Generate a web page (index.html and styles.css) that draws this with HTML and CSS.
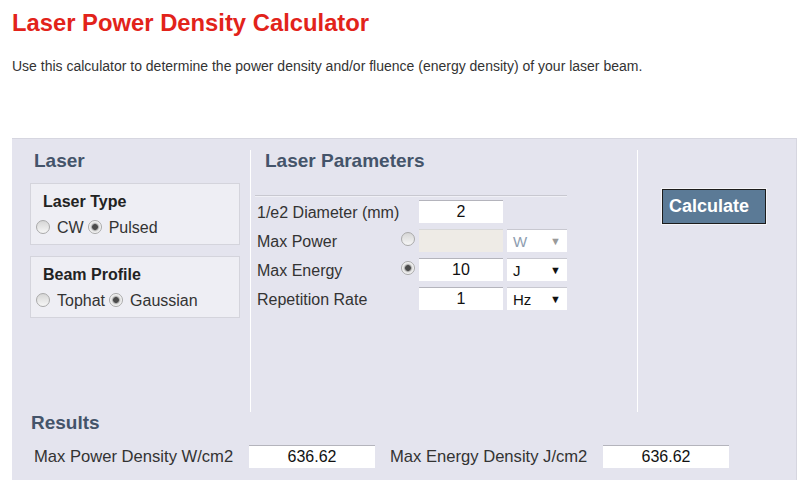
FILE: index.html
```html
<!DOCTYPE html>
<html lang="en">
<head>
    <meta charset="UTF-8">
    <title>Laser Power Density Calculator</title>
    <link rel="stylesheet" href="styles.css">
</head>
<body>
    <h1 class="title">Laser Power Density Calculator</h1>
    <p class="intro">Use this calculator to determine the power density and/or fluence (energy density) of your laser beam.</p>

    <div class="calc">
        <div class="cols">
            <div class="col col-laser">
                <h2 class="sec-head">Laser</h2>
                <div class="opt-box">
                    <div class="opt-title">Laser Type</div>
                    <div class="opt-row">
                        <input type="radio" name="ltype" id="cw"><label for="cw">CW</label>
                        <input type="radio" name="ltype" id="pulsed" checked><label for="pulsed">Pulsed</label>
                    </div>
                </div>
                <div class="opt-box">
                    <div class="opt-title">Beam Profile</div>
                    <div class="opt-row">
                        <input type="radio" name="profile" id="tophat"><label for="tophat">Tophat</label>
                        <input type="radio" name="profile" id="gauss" checked><label for="gauss">Gaussian</label>
                    </div>
                </div>
            </div>

            <div class="col col-params">
                <h2 class="sec-head">Laser Parameters</h2>
                <div class="rule"></div>
                <div class="param-grid">
                    <label>1/e2 Diameter (mm)</label>
                    <span></span>
                    <input type="text" class="num" value="2">
                    <span></span>

                    <label>Max Power</label>
                    <input type="radio" name="mode" class="mode">
                    <input type="text" class="num" disabled>
                    <div class="unit disabled"><span>W</span><span class="arrow">▼</span></div>

                    <label>Max Energy</label>
                    <input type="radio" name="mode" class="mode" checked>
                    <input type="text" class="num" value="10">
                    <div class="unit"><span>J</span><span class="arrow">▼</span></div>

                    <label>Repetition Rate</label>
                    <span></span>
                    <input type="text" class="num" value="1">
                    <div class="unit"><span>Hz</span><span class="arrow">▼</span></div>
                </div>
            </div>

            <div class="col col-action">
                <button class="calc-btn">Calculate</button>
            </div>
        </div>

        <div class="results">
            <h2 class="sec-head">Results</h2>
            <div class="result-row">
                <label class="res-label">Max Power Density W/cm2</label>
                <input type="text" class="num res-out" value="636.62" readonly>
                <label class="res-label second">Max Energy Density J/cm2</label>
                <input type="text" class="num res-out" value="636.62" readonly>
            </div>
        </div>
    </div>
</body>
</html>
```

FILE: styles.css
```css
body {
    margin: 0;
    padding: 9px 0 0 12px;
    background-color: #fff;
    font-family: "Liberation Sans", Arial, sans-serif;
    color: #333;
    overflow: hidden;
}
.title {
    margin: 0;
    font-size: 23.8px;
    line-height: 28px;
    color: #e2231a;
}
.intro {
    margin: 21px 0 0;
    font-size: 14px;
    line-height: 16px;
    color: #333;
}
.calc {
    margin-top: 64px;
    width: 785px;
    height: 343px;
    background-color: #e4e4ee;
    border-top: 1px solid #d6d6e0;
    border-right: 1px solid #d6d6e0;
    box-sizing: border-box;
}
.cols {
    display: grid;
    grid-template-columns: 238px 388px 1fr;
    margin-top: 11px;
    height: 262px;
}
.col-params {
    border-left: 1px solid #fff;
    border-right: 1px solid #fff;
    padding-left: 4px;
}
.sec-head {
    margin: 0;
    font-size: 19px;
    line-height: 22px;
    color: #44546a;
}
.col-laser {
    padding: 0 10px 0 18px;
}
.col-laser .sec-head {
    padding-left: 4px;
    margin-bottom: 11px;
}
.opt-box {
    background-color: #eeeef4;
    border: 1px solid #d4d4dc;
    padding: 8px 5px 7px;
    margin-bottom: 11px;
    height: 62px;
    box-sizing: border-box;
}
.opt-title {
    font-size: 16px;
    line-height: 19px;
    font-weight: bold;
    color: #222;
    padding-left: 7px;
}
.opt-row {
    display: flex;
    align-items: center;
    margin-top: 7px;
    font-size: 16px;
    line-height: 20px;
    color: #333;
}
.opt-row label {
    margin: 0 4px 0 7px;
}
input[type="radio"] {
    appearance: none;
    -webkit-appearance: none;
    flex-shrink: 0;
    width: 14px;
    height: 14px;
    margin: 0;
    border-radius: 50%;
    border: 1px solid #a9a9a9;
    background: linear-gradient(#d6d6d6, #f6f6f6);
    box-sizing: border-box;
}
input[type="radio"]:checked {
    background: radial-gradient(circle, #4a4a4a 0 2.5px, #8a8a8a 3px, #d6d6d6 4px, #f4f4f4 5.5px);
}
.opt-row input[type="radio"] {
    margin-top: -3px;
}
.col-params .sec-head {
    padding-left: 10px;
}
.rule {
    width: 312px;
    height: 1px;
    margin-top: 23px;
    background-color: #c8c8d0;
    border-bottom: 1px solid #f0f0f6;
}
.param-grid {
    display: grid;
    grid-template-columns: 146px 18px 88px 60px;
    grid-auto-rows: 23px;
    row-gap: 6px;
    margin-top: 3px;
    align-items: center;
    font-size: 16px;
}
.param-grid label {
    padding: 2px 0 0 2px;
    color: #333;
}
.param-grid .mode {
    margin-top: -3px;
}
.num {
    width: 84px;
    height: 23px;
    padding: 0;
    border: none;
    border-top: 1px solid #b4b4bc;
    background-color: #fff;
    font-family: inherit;
    font-size: 16px;
    color: #111;
    text-align: center;
    box-sizing: border-box;
}
.num:disabled {
    background-color: #eeebe6;
    border-top-color: #d8d8d8;
}
.unit {
    display: flex;
    justify-content: space-between;
    align-items: center;
    height: 23px;
    padding: 0 6px;
    background-color: #fff;
    border-top: 1px solid #c8c8d0;
    box-sizing: border-box;
    font-size: 15px;
    color: #111;
}
.unit .arrow {
    font-size: 11px;
    color: #111;
}
.unit.disabled {
    color: #8d9db0;
}
.unit.disabled .arrow {
    color: #9a9a9a;
}
.col-action {
    padding: 39px 0 0 24px;
}
.calc-btn {
    width: 104px;
    height: 35px;
    padding: 0 0 0 6px;
    text-align: left;
    background-color: #5b7a96;
    color: #fff;
    font-family: inherit;
    font-size: 18px;
    font-weight: bold;
    border: 1px solid #1c1c1c;
    outline: 1px solid #f4f4f8;
    cursor: pointer;
}
.results {
    padding-left: 19px;
}
.result-row {
    display: flex;
    align-items: center;
    margin-top: 11px;
}
.res-label {
    width: 218px;
    padding-left: 3px;
    box-sizing: border-box;
    font-size: 16.6px;
    color: #333;
}
.res-label.second {
    width: 213px;
    margin-left: 15px;
    padding-left: 0;
}
.res-out {
    width: 126px;
}
```
